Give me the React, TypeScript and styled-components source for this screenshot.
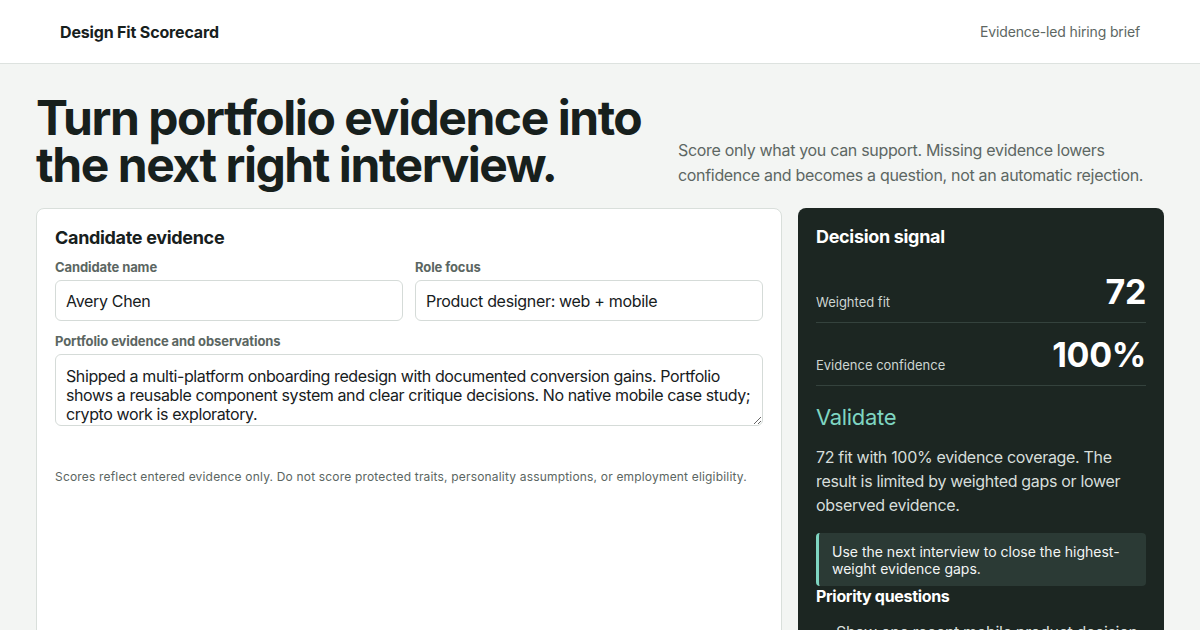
import styled, { createGlobalStyle } from "styled-components";

const GlobalStyle = createGlobalStyle`
  * { box-sizing: border-box; }
  body {
    margin: 0;
    background: #f3f5f3;
    color: #17201d;
    font-family: Inter, "Noto Sans", "Liberation Sans", sans-serif;
    letter-spacing: -0.02em;
  }
`;

const Header = styled.header`
  height: 64px;
  background: #ffffff;
  border-bottom: 1px solid #dde2df;
  display: flex;
  align-items: center;
  justify-content: space-between;
  padding: 0 60px;
`;

const Brand = styled.div`
  font-size: 16px;
  font-weight: 700;
  letter-spacing: -0.01em;
  color: #17201d;
`;

const Tagline = styled.div`
  font-size: 14px;
  letter-spacing: -0.01em;
  color: #5d6763;
`;

const Main = styled.main`
  padding: 30px 36px 0;
`;

const Hero = styled.section`
  display: flex;
  align-items: flex-end;
  justify-content: space-between;
  gap: 30px;
`;

const Title = styled.h1`
  margin: 0;
  font-size: 48px;
  line-height: 47px;
  font-weight: 700;
  letter-spacing: -1.45px;
  color: #17201d;
  max-width: 620px;
  flex: 1;
`;

const Lead = styled.p`
  margin: 0 18px 0 0;
  width: 468px;
  flex-shrink: 0;
  font-size: 16px;
  line-height: 25px;
  color: #5d6763;
`;

const Grid = styled.div`
  margin-top: 20px;
  display: grid;
  grid-template-columns: minmax(0, 1fr) 366px;
  gap: 16px;
  align-items: start;
`;

const Card = styled.section`
  background: #ffffff;
  border: 1px solid #d9dfdb;
  border-radius: 8px;
  padding: 18px 18px 0;
  min-height: 440px;
`;

const CardTitle = styled.h2<{ $dark?: boolean }>`
  margin: 0 0 10px;
  font-size: 18px;
  line-height: 22px;
  font-weight: 700;
  color: ${(p) => (p.$dark ? "#ffffff" : "#17201d")};
`;

const FieldRow = styled.div`
  display: grid;
  grid-template-columns: 1fr 1fr;
  gap: 12px;
`;

const Field = styled.label`
  display: flex;
  flex-direction: column;
  gap: 5px;
  margin-bottom: 12px;
`;

const Label = styled.span`
  font-size: 13px;
  line-height: 16px;
  font-weight: 700;
  letter-spacing: -0.1px;
  color: #5b6662;
`;

const Input = styled.input`
  height: 41px;
  border: 1px solid #d5dbd8;
  border-radius: 6px;
  padding: 0 10px;
  font-family: inherit;
  letter-spacing: inherit;
  font-size: 16px;
  color: #17201d;
  background: #ffffff;
`;

const TextArea = styled.textarea`
  height: 72px;
  border: 1px solid #d5dbd8;
  border-radius: 6px;
  padding: 12px 6px 4px 10px;
  font-family: inherit;
  letter-spacing: -0.4px;
  font-size: 16px;
  line-height: 19px;
  color: #17201d;
  resize: vertical;
  overflow: hidden;
`;

const Note = styled.p`
  margin: 43px 0 0;
  font-size: 12px;
  line-height: 16px;
  letter-spacing: 0.18px;
  color: #5b6662;
`;

const Signal = styled.aside`
  background: #1c2622;
  border-radius: 8px;
  padding: 18px 18px 0;
  min-height: 440px;
  color: #d7dedb;
`;

const Metric = styled.div`
  display: flex;
  align-items: flex-end;
  justify-content: space-between;
  padding: 12px 0 10px;
  border-bottom: 1px solid #34423d;
  &:first-of-type {
    padding-top: 14px;
  }
`;

const MetricLabel = styled.span`
  font-size: 13px;
  letter-spacing: 0;
  color: #cdd5d1;
  padding-bottom: 2px;
`;

const MetricValue = styled.span`
  font-size: 34px;
  line-height: 40px;
  font-weight: 700;
  color: #ffffff;
`;

const Verdict = styled.h3`
  margin: 17px 0 14px;
  font-size: 22px;
  line-height: 28px;
  font-weight: 400;
  color: #7fd6c2;
`;

const Summary = styled.p`
  margin: 0 0 16px;
  font-size: 16px;
  line-height: 24px;
  color: #d7dedb;
`;

const Callout = styled.div`
  background: #2b3a35;
  border-left: 3px solid #7fd6c2;
  border-radius: 4px;
  padding: 10px 14px 9px 13px;
  font-size: 14px;
  line-height: 17px;
  letter-spacing: 0;
  color: #f2f5f4;
`;

const SubHead = styled.h4`
  margin: 0 0 14px;
  font-size: 16px;
  line-height: 20px;
  font-weight: 700;
  color: #ffffff;
`;

const List = styled.ul`
  margin: 0;
  padding-left: 20px;
  font-size: 16px;
  line-height: 24px;
  color: #d7dedb;
`;

export default function App() {
  return (
    <>
      <GlobalStyle />
      <Header>
        <Brand>Design Fit Scorecard</Brand>
        <Tagline>Evidence-led hiring brief</Tagline>
      </Header>
      <Main>
        <Hero>
          <Title>Turn portfolio evidence into the next right interview.</Title>
          <Lead>
            Score only what you can support. Missing evidence lowers confidence
            and becomes a question, not an automatic rejection.
          </Lead>
        </Hero>
        <Grid>
          <Card>
            <CardTitle>Candidate evidence</CardTitle>
            <FieldRow>
              <Field>
                <Label>Candidate name</Label>
                <Input defaultValue="Avery Chen" />
              </Field>
              <Field>
                <Label>Role focus</Label>
                <Input defaultValue="Product designer: web + mobile" />
              </Field>
            </FieldRow>
            <Field>
              <Label>Portfolio evidence and observations</Label>
              <TextArea defaultValue="Shipped a multi-platform onboarding redesign with documented conversion gains. Portfolio shows a reusable component system and clear critique decisions. No native mobile case study; crypto work is exploratory." />
            </Field>
            <Note>
              Scores reflect entered evidence only. Do not score protected
              traits, personality assumptions, or employment eligibility.
            </Note>
          </Card>
          <Signal>
            <CardTitle $dark>Decision signal</CardTitle>
            <Metric>
              <MetricLabel>Weighted fit</MetricLabel>
              <MetricValue>72</MetricValue>
            </Metric>
            <Metric>
              <MetricLabel>Evidence confidence</MetricLabel>
              <MetricValue>100%</MetricValue>
            </Metric>
            <Verdict>Validate</Verdict>
            <Summary>
              72 fit with 100% evidence coverage. The result is limited by
              weighted gaps or lower observed evidence.
            </Summary>
            <Callout>
              Use the next interview to close the highest-weight evidence gaps.
            </Callout>
            <SubHead>Priority questions</SubHead>
            <List>
              <li>Show one recent mobile product decision.</li>
            </List>
          </Signal>
        </Grid>
      </Main>
    </>
  );
}
